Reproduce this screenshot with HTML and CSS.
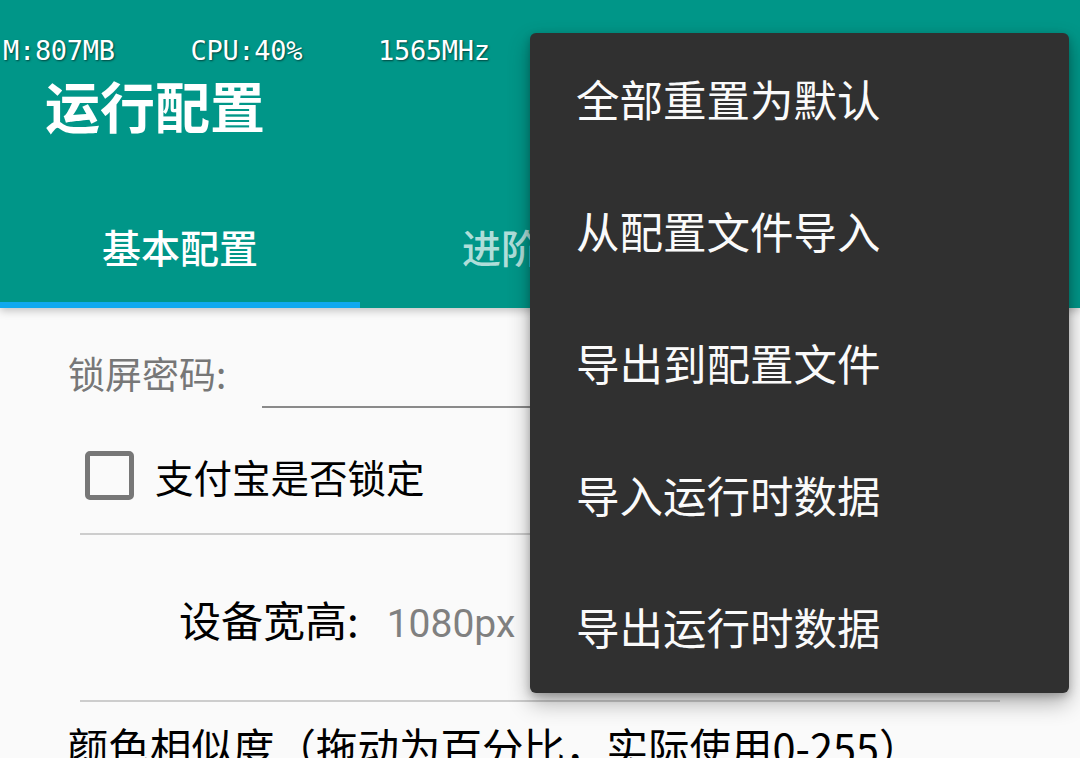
FILE: index.html
```html
<!DOCTYPE html>
<html lang="zh-CN">
<head>
<meta charset="utf-8">
<title>运行配置</title>
<link rel="stylesheet" href="styles.css">
</head>
<body>
<div class="screen">
  <header class="appbar">
    <div class="stats">
      <span class="stat">M:807MB</span>
      <span class="stat">CPU:40%</span>
      <span class="stat">1565MHz</span>
    </div>
    <h1 class="title">运行配置</h1>
    <nav class="tabs">
      <div class="tab active"><span>基本配置</span></div>
      <div class="tab"><span>进阶配置</span></div>
      <div class="tab"></div>
    </nav>
  </header>

  <main class="content">
    <div class="row pwd-row">
      <span class="pwd-label">锁屏密码:</span>
      <div class="pwd-input"></div>
    </div>

    <div class="row check-row">
      <span class="checkbox"></span>
      <span class="check-label">支付宝是否锁定</span>
    </div>

    <div class="divider first"></div>

    <div class="row size-row">
      <span class="size-label">设备宽高:</span>
      <span class="size-value">1080px</span>
    </div>

    <div class="divider second"></div>

    <div class="row sim-row">颜色相似度（拖动为百分比，实际使用0-255）</div>
  </main>

  <ul class="menu">
    <li class="menu-item">全部重置为默认</li>
    <li class="menu-item">从配置文件导入</li>
    <li class="menu-item">导出到配置文件</li>
    <li class="menu-item">导入运行时数据</li>
    <li class="menu-item">导出运行时数据</li>
  </ul>
</div>
</body>
</html>
```

FILE: styles.css
```css
* {
  box-sizing: border-box;
}

html, body {
  margin: 0;
  padding: 0;
  background: #fafafa;
}

body {
  font-family: "Noto Sans CJK SC", "Noto Sans", sans-serif;
  color: #000;
}

.screen {
  position: relative;
  width: 1080px;
  height: 758px;
  overflow: hidden;
  background: #fafafa;
}

/* ---------- app bar ---------- */
.appbar {
  position: relative;
  z-index: 1;
  height: 308px;
  background: #009688;
  color: #fff;
  box-shadow: 0 3px 8px rgba(0, 0, 0, 0.22);
}

.stats {
  display: flex;
  padding: 36px 0 0 3px;
  height: 66px;
}

.stat {
  width: 187.5px;
  font-family: "DejaVu Sans Mono", monospace;
  font-size: 27px;
  line-height: 30px;
  letter-spacing: -0.3px;
  color: #fff;
  text-shadow: 1px 1px 2px rgba(0, 0, 0, 0.55);
}

.title {
  margin: 0;
  padding-left: 45px;
  height: 76px;
  font-size: 55px;
  line-height: 76px;
  font-weight: 700;
}

.tabs {
  display: flex;
  height: 166px;
}

.tab {
  width: 360px;
  padding-top: 80px;
  text-align: center;
  font-size: 39px;
  line-height: 48px;
  font-weight: 500;
  color: rgba(255, 255, 255, 0.7);
}

.tab.active {
  color: #fff;
  border-bottom: 6px solid #10a9ee;
}

/* ---------- content ---------- */
.content {
  display: flex;
  flex-direction: column;
}

.row {
  display: flex;
}

.pwd-row {
  padding-top: 41px;
  align-items: flex-start;
}

.pwd-label {
  padding-left: 68px;
  font-size: 37px;
  line-height: 48px;
  color: #777;
}

.pwd-input {
  flex: 1;
  margin-left: 36px;
  margin-right: 68px;
  height: 59px;
  border-bottom: 2px solid #8a8a8a;
}

.check-row {
  margin-top: 43px;
  padding-left: 85px;
  align-items: center;
  gap: 21px;
}

.checkbox {
  width: 49px;
  height: 49px;
  border: 5px solid #777;
  border-radius: 5px;
}

.check-label {
  font-size: 38.5px;
  line-height: 48px;
}

.divider {
  height: 2px;
  margin: 0 80px;
  background: #cdcdcd;
}

.divider.first {
  margin-top: 33px;
}

.size-row {
  margin-top: 58px;
  padding-left: 179px;
  align-items: baseline;
  line-height: 52px;
}

.size-label {
  font-size: 42px;
}

.size-value {
  margin-left: 28px;
  font-family: Roboto, "Noto Sans", sans-serif;
  font-size: 39px;
  color: #808080;
}

.divider.second {
  margin-top: 50px;
}

.sim-row {
  margin-top: 20px;
  padding-left: 67px;
  font-size: 41.5px;
  line-height: 48px;
  white-space: nowrap;
}

/* ---------- overflow menu ---------- */
.menu {
  position: absolute;
  z-index: 5;
  left: 530px;
  top: 33px;
  width: 539px;
  margin: 0;
  padding: 0;
  list-style: none;
  background: #303030;
  border-radius: 6px;
  box-shadow: 0 10px 22px rgba(0, 0, 0, 0.3), 0 3px 8px rgba(0, 0, 0, 0.22);
}

.menu-item {
  height: 132px;
  padding-left: 46px;
  font-size: 43.5px;
  line-height: 132px;
  color: #fafafa;
  white-space: nowrap;
}
```
